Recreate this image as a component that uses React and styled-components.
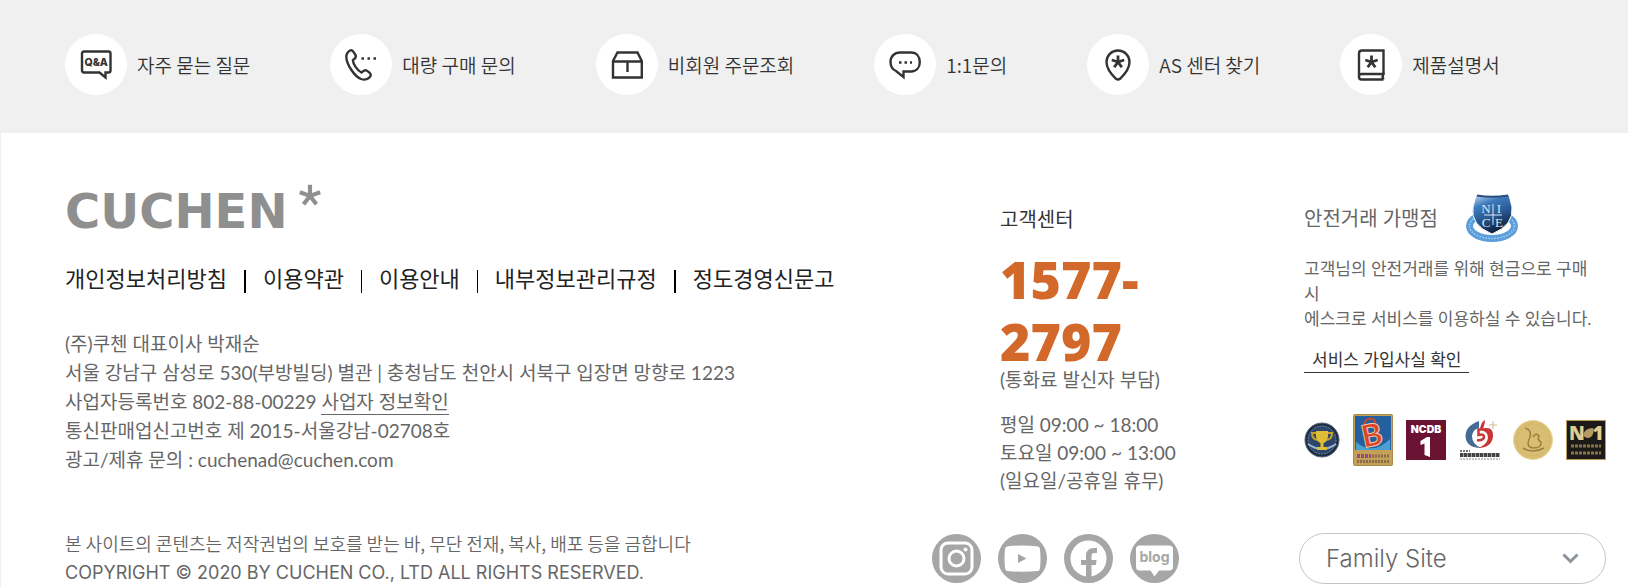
import styled, { createGlobalStyle } from "styled-components"

const GlobalStyle = createGlobalStyle`
  *, *::before, *::after {
    box-sizing: border-box;
  }

  body {
    margin: 0;
    background: #fff;
    color: #666;
    font-family: "Lato", "Noto Sans CJK KR", sans-serif;
    font-size: 19px;
    word-break: keep-all;
  }

  a {
    color: inherit;
    text-decoration: none;
  }

  p, ul {
    margin: 0;
    padding: 0;
    list-style: none;
  }

  svg {
    display: block;
    flex: none;
  }
`

const Page = styled.div`
  border-left: 1px solid #f0f0f0;
`

/* quick menu */

const QuickMenu = styled.nav`
  background: #f0f0f0;
  padding: 34px 22px 38px 64px;
`

const QuickList = styled.ul`
  display: flex;
  flex-wrap: wrap;
  gap: 20px 80px;
`

const QuickLink = styled.a`
  display: flex;
  align-items: center;
  gap: 10px;
  color: #333;
  font-family: "Noto Sans CJK KR", sans-serif;
  font-weight: 350;
  line-height: 28px;
  white-space: nowrap;
`

const QuickIcon = styled.span`
  display: flex;
  align-items: center;
  justify-content: center;
  width: 62px;
  height: 61px;
  border-radius: 50%;
  background: #fff;
`

/* footer */

const FooterWrap = styled.footer`
  padding: 50px 22px 0 64px;
`

const FooterTop = styled.div`
  display: grid;
  grid-template-columns: 1fr 304px 302px;
`

const Logo = styled.a`
  display: flex;
  align-items: flex-start;
  justify-content: space-between;
  width: 257px;
  height: 48px;
  color: #8f8f8f;
  font-family: "DejaVu Sans", sans-serif;
  font-size: 48px;
  font-weight: 700;
  line-height: 56px;
`

const Policy = styled.ul`
  display: flex;
  align-items: flex-end;
  margin-top: 30px;
  color: #222;
  font-family: "Noto Sans CJK KR", sans-serif;
  font-size: 22px;
  line-height: 32px;
  white-space: nowrap;
`

const Divider = styled.li`
  width: ${props => (props.$thick ? 2 : 1)}px;
  height: 23px;
  margin: 0 17px;
  background: #000;
`

const Info = styled.address`
  margin-top: 36px;
  font-style: normal;
  font-weight: 400;
  line-height: 29px;
`

const InfoLink = styled.a`
  padding-bottom: 1px;
  border-bottom: 1px solid #666;
`

const Center = styled.section`
  padding: 22px 120px 0 0;
  line-height: 28px;
`

const CenterTitle = styled.p`
  color: #333;
  font-size: 20px;
`

const Tel = styled.a`
  display: block;
  margin-top: 15px;
  color: #d2692a;
  font-family: "Open Sans", sans-serif;
  font-size: 52px;
  font-weight: 800;
  line-height: 62px;
`

const TelNote = styled.p`
  line-height: 16px;
  white-space: nowrap;
`

const Hours = styled.p`
  margin-top: 23px;
  white-space: nowrap;
`

const Escrow = styled.section`
  padding-top: 11px;
  font-size: 17px;
`

const EscrowHead = styled.div`
  display: flex;
  align-items: center;
  gap: 28px;
  font-size: 20px;
  line-height: 28px;
`

const EscrowText = styled.p`
  margin-top: 14px;
  padding-right: 12px;
  line-height: 25px;
`

const EscrowLink = styled.a`
  display: inline-block;
  margin-top: 17px;
  padding: 0 8px;
  border-bottom: 1px solid #333;
  color: #333;
  line-height: 24px;
`

const Awards = styled.ul`
  display: flex;
  align-items: center;
  justify-content: space-between;
  margin-top: 41px;
`

const FooterBottom = styled.div`
  display: flex;
  align-items: center;
  margin-top: 34px;
`

const Copyright = styled.div`
  flex: 1;
  font-family: "Noto Sans CJK KR", sans-serif;
  font-size: 18px;
  font-weight: 350;
  line-height: 29px;
`

const CopyrightEn = styled.p`
  font-family: "Inter", sans-serif;
  font-weight: 400;
`

const Social = styled.ul`
  display: flex;
  gap: 17px;
  margin-right: 120px;
`

const FamilyBox = styled.label`
  display: grid;
  align-items: center;
  width: 307px;

  > * {
    grid-area: 1 / 1;
  }

  svg {
    justify-self: end;
    margin-right: 27px;
    pointer-events: none;
  }
`

const FamilySelect = styled.select`
  appearance: none;
  width: 100%;
  height: 51px;
  padding: 0 60px 0 26px;
  border: 1px solid #c4c4c4;
  border-radius: 26px;
  background: #fff;
  color: #666;
  font-family: "Inter", sans-serif;
  font-size: 24px;
  font-weight: 300;
`

const Line = styled.svg`
  fill: none;
  stroke: #333;
  stroke-width: 2.4;
`

const Star = ({ x, y }) => (
  <path
    transform={`translate(${x} ${y})`}
    d="M0 0V-6.5M0 0L6.2-2M0 0L3.8 5.3M0 0L-3.8 5.3M0 0L-6.2-2"
    strokeWidth="2.8"
  />
)

const QnaIcon = () => (
  <Line width="32" height="32" viewBox="0 0 32 32">
    <path d="M4 2.5H28.500Q30.500 2.500 30.500 4.500V21.500Q30.500 23.500 28.500 23.500H25.500V28.500L19.500 23.500H4Q2 23.500 2 21.500V4.500Q2 2.500 4 2.500Z" />
    <text
      x="16.2"
      y="17"
      fill="#333"
      stroke="none"
      fontFamily="Inter, sans-serif"
      fontSize="10.5"
      fontWeight="800"
      textAnchor="middle"
    >
      Q&amp;A
    </text>
  </Line>
)

const PhoneIcon = () => (
  <Line width="32" height="32" viewBox="0 0 32 32">
    <path d="M5 1.500C7 .5 8 2 10.500 6C11.500 8 10.500 9.500 8 11C7.500 14.500 12.500 21.500 16.500 23.500C18.500 22 19.500 20.500 21.500 21.500C25 23.500 26.500 25 25.500 27C24 30 20 31.500 16 30C9 27 1.500 15 1.300 8C1.300 5 2.500 3 5 1.500Z" />
    <path d="M16.500 9.500H31" strokeWidth="2.500" strokeDasharray="2.500 3.500" />
  </Line>
)

const BoxIcon = () => (
  <Line width="32" height="32" viewBox="0 0 32 32">
    <path d="M2 12V28.500H30.800V12L26.500 3.500H6.500ZM2 12.500H31M16.500 12.500V23" />
  </Line>
)

const ChatIcon = () => (
  <Line width="32" height="32" viewBox="0 0 32 32">
    <path d="M11 3.500H22C27.500 3.500 30.800 7.500 30.800 13C30.800 18.500 27.500 22.500 22 22.500H14.500V28L7 22C3.500 20.500 1.500 17 1.500 13C1.500 7.500 5.500 3.500 11 3.500Z" />
    <path d="M10 13.500H23" strokeWidth="2.500" strokeDasharray="2.500 3" />
  </Line>
)

const PinIcon = () => (
  <Line width="32" height="32" viewBox="0 0 32 32">
    <path d="M16 1.500C22.500 1.500 27.500 6.500 27.500 13C27.500 19 22.500 25.500 18 29.800Q16 31.300 14 29.800C9.500 25.500 4.500 19 4.500 13C4.500 6.500 9.500 1.500 16 1.500Z" />
    <Star x={16} y={13} />
  </Line>
)

const BookIcon = () => (
  <Line width="32" height="32" viewBox="0 0 32 32">
    <path d="M28.500 25V1.500H7Q4 1.500 4 4.500V28Q4 30.500 6.500 30.500H28.500M4 27.500Q4 25 6.500 25H28.500L27.500 28L28.500 30.500" />
    <Star x={16.5} y={13} />
  </Line>
)

const NiceMark = () => (
  <svg width="52" height="48" viewBox="0 0 52 48">
    <defs>
      <linearGradient id="shield" x1="0" y1="0" x2="0.4" y2="1">
        <stop offset="0" stopColor="#c9dcee" />
        <stop offset="0.3" stopColor="#3f7cbd" />
        <stop offset="0.65" stopColor="#27558f" />
        <stop offset="1" stopColor="#10233f" />
      </linearGradient>
    </defs>
    <ellipse cx="26" cy="32" rx="22.500" ry="12.500" fill="none" stroke="#5b9edb" strokeWidth="7" />
    <ellipse cx="26" cy="32" rx="22.500" ry="12.500" fill="none" stroke="#a9cff0" strokeWidth="1.500" strokeDasharray="1.500 1.500" />
    <path d="M10 1Q26 3 43 1L46 13Q48 31 26 40Q4 31 7 13Z" fill="url(#shield)" stroke="#fff" strokeWidth="1" />
    <path d="M11 1.500Q26 4 42 1.500" fill="none" stroke="#2b4f7c" strokeWidth="2" />
    <path d="M27 10V31M18 21H36" stroke="#dbe8f5" strokeWidth="1" />
    <g fill="#dbe8f5" fontFamily="Liberation Serif, serif" fontSize="13" textAnchor="middle">
      <text x="20" y="19">N</text>
      <text x="33" y="19">I</text>
      <text x="20" y="33">C</text>
      <text x="33" y="33">E</text>
    </g>
  </svg>
)

const TrophyAward = () => (
  <svg width="36" height="36" viewBox="0 0 36 36">
    <circle cx="18" cy="18" r="17" fill="#1c2b42" stroke="#5b6573" />
    <circle cx="18" cy="18" r="14" fill="#2c466c" stroke="#7b8da6" strokeDasharray="2 1" />
    <path d="M4 22Q18 32 32 22" fill="none" stroke="#9fb4cd" strokeWidth="2" />
    <path d="M13 11H8Q8 18 15 18M23 11H28Q28 18 21 18" fill="none" stroke="#c9a227" strokeWidth="2" />
    <path d="M12 9H24Q25 19 19.500 21V25H23V28H13V25H16.500V21Q11 19 12 9Z" fill="#e0bd35" />
  </svg>
)

const BrandAward = () => (
  <svg width="40" height="52" viewBox="0 0 40 52">
    <rect x="0.500" y="0.500" width="39" height="51" rx="1" fill="#c5a057" stroke="#a8884c" />
    <rect x="2" y="2" width="36" height="34" fill="#245f9f" />
    <path d="M3 28Q20 42 37 25V36H3Z" fill="#4aa0d2" />
    <path d="M11 12Q12 3 20 5Q23 7 22 10" fill="none" stroke="#c84632" strokeWidth="2" />
    <text x="19" y="32" transform="rotate(-12 19 22)" fill="#d9442a" stroke="#f2c9a0" strokeWidth="1" fontFamily="Lato, sans-serif" fontSize="31" fontWeight="900" textAnchor="middle">B</text>
    <path d="M4 42H18" stroke="#9a4a83" strokeWidth="4" strokeDasharray="3 1" />
    <path d="M19 42H36M4 47.500H36" stroke="#8a6a4d" strokeWidth="3" strokeDasharray="2 1" />
  </svg>
)

const NcdbAward = () => (
  <svg width="40" height="40" viewBox="0 0 40 40">
    <rect width="40" height="40" fill="#6a1231" />
    <text x="20" y="13" fill="#fff" fontFamily="Inter, sans-serif" fontSize="10.5" fontWeight="900" textAnchor="middle">NCDB</text>
    <path d="M14.500 21L21 17H24V37L18.500 35V23.500L14.500 25Z" fill="#fff" />
  </svg>
)

const AppleAward = () => (
  <svg width="40" height="40" viewBox="0 0 40 40">
    <path d="M19 1Q5 6 5.500 17Q7 28 21 28Q12 24 12 16Q13 9 19 8Z" fill="#436b96" />
    <path d="M25 8Q34 7 33 17Q31 28 18 28Q27 25 28 18Q28 12 23 11Z" fill="#c93636" />
    <path d="M20 9Q21 2 25 0Q25 4 23 9Z" fill="#c93636" />
    <path d="M25 9.500H18.500V15Q24.500 13.500 24 17.500Q22.500 21 17 20" fill="none" stroke="#c93636" strokeWidth="2.500" />
    <path d="M33 1V9M29 5H37" stroke="#cdbb91" />
    <path d="M0 31H10" stroke="#777" strokeWidth="2" strokeDasharray="2 1" />
    <path d="M0 35H40" stroke="#444" strokeWidth="4" strokeDasharray="3.500 .5" />
    <path d="M0 39H40" stroke="#888" strokeDasharray="2 1" />
  </svg>
)

const GoldAward = () => (
  <svg width="40" height="40" viewBox="0 0 40 40">
    <circle cx="20" cy="20" r="19.500" fill="#d8be72" stroke="#e8d69d" />
    <circle cx="20" cy="20" r="16" fill="none" stroke="#cbb063" strokeDasharray="1.500 1.500" />
    <path d="M12 8Q19 10 17 17Q12 27 20 28Q29 28 28 22Q24 20 26 16Q23 12 20 17M10 28Q20 34 31 28" fill="none" stroke="#9b803c" strokeWidth="1.500" />
  </svg>
)

const NumberOneAward = () => (
  <svg width="40" height="40" viewBox="0 0 40 40">
    <rect x="0.500" y="0.500" width="39" height="39" fill="#1c1a18" stroke="#b89d5d" />
    <g fill="#e0cb91" fontFamily="Open Sans, sans-serif" fontSize="19" fontWeight="800" textAnchor="middle">
      <text x="11" y="20">N</text>
      <text x="32" y="20">1</text>
    </g>
    <path d="M17 15Q19 8 27 8Q29 12 25 17Q20 20 17 15Z" fill="#b59a61" />
    <path d="M5 26H35M5 33H35" stroke="#8a7447" strokeWidth="3" strokeDasharray="3 1" />
  </svg>
)

const InstagramIcon = () => (
  <svg width="49" height="49" viewBox="0 0 49 49">
    <circle cx="24.500" cy="24.500" r="24.500" fill="#a6a6a6" />
    <g fill="none" stroke="#fff" strokeWidth="3">
      <rect x="9" y="9" width="31" height="31" rx="7" />
      <circle cx="24.500" cy="24.500" r="7.500" />
    </g>
    <circle cx="33.500" cy="15.500" r="2" fill="#fff" />
  </svg>
)

const YoutubeIcon = () => (
  <svg width="49" height="49" viewBox="0 0 49 49">
    <circle cx="24.500" cy="24.500" r="24.500" fill="#a6a6a6" />
    <path d="M9 12.500Q24.500 10.500 40 12.500Q42 13 42 15.500Q43 24.500 42 34Q42 36.500 40 37Q24.500 38.500 9 37Q7 36.500 7 34Q6 24.500 7 15.500Q7 13 9 12.500Z" fill="#fff" />
    <path d="M20 20L28.500 24.500L20 29Z" fill="#a6a6a6" />
  </svg>
)

const FacebookIcon = () => (
  <svg width="49" height="49" viewBox="0 0 49 49">
    <circle cx="24.500" cy="24.500" r="24.500" fill="#a6a6a6" />
    <circle cx="24.500" cy="24.500" r="18" fill="#fff" />
    <path d="M22 43V31H17V26H22V22Q22 14 30 14H33V19H30Q27.500 19 27.500 22V26H32.500L32 31H27.500V43Z" fill="#a6a6a6" />
  </svg>
)

const BlogIcon = () => (
  <svg width="49" height="49" viewBox="0 0 49 49">
    <circle cx="24.500" cy="24.500" r="24.500" fill="#a6a6a6" />
    <path d="M10 11.500H39Q43 11.500 43 15V33Q43 36.500 39 36.500H29L24.500 42.500L20.500 36.500H10Q6 36.500 6 33V15Q6 11.500 10 11.500Z" fill="#fff" />
    <text x="24.500" y="28" fill="#a6a6a6" fontFamily="Inter, sans-serif" fontSize="14" fontWeight="700" textAnchor="middle">blog</text>
  </svg>
)

const quickMenu = [
  { label: "자주 묻는 질문", Icon: QnaIcon },
  { label: "대량 구매 문의", Icon: PhoneIcon },
  { label: "비회원 주문조회", Icon: BoxIcon },
  { label: "1:1문의", Icon: ChatIcon },
  { label: "AS 센터 찾기", Icon: PinIcon },
  { label: "제품설명서", Icon: BookIcon },
]

const awards = [TrophyAward, BrandAward, NcdbAward, AppleAward, GoldAward, NumberOneAward]

const social = [
  { name: "Instagram", Icon: InstagramIcon },
  { name: "YouTube", Icon: YoutubeIcon },
  { name: "Facebook", Icon: FacebookIcon },
  { name: "Blog", Icon: BlogIcon },
]

export default function App() {
  return (
    <Page>
      <GlobalStyle />
      <QuickMenu>
        <QuickList>
          {quickMenu.map(({ label, Icon }) => (
            <li key={label}>
              <QuickLink href="#">
                <QuickIcon>
                  <Icon />
                </QuickIcon>
                {label}
              </QuickLink>
            </li>
          ))}
        </QuickList>
      </QuickMenu>

      <FooterWrap>
        <FooterTop>
          <div>
            <Logo href="#">
              CUCHEN
              <svg width="24" height="24" viewBox="0 0 26 26">
                <path
                  d="M13 14V2M13 14L24 10M13 14L20 23M13 14L6 23M13 14L2 10"
                  fill="none"
                  stroke="#8f8f8f"
                  strokeWidth="4.500"
                />
              </svg>
            </Logo>
            <Policy>
              <li><a href="#">개인정보처리방침</a></li>
              <Divider $thick aria-hidden="true" />
              <li><a href="#">이용약관</a></li>
              <Divider aria-hidden="true" />
              <li><a href="#">이용안내</a></li>
              <Divider aria-hidden="true" />
              <li><a href="#">내부정보관리규정</a></li>
              <Divider $thick aria-hidden="true" />
              <li><a href="#">정도경영신문고</a></li>
            </Policy>
            <Info>
              <p>(주)쿠첸 대표이사 박재순</p>
              <p>서울 강남구 삼성로 530(부방빌딩) 별관 | 충청남도 천안시 서북구 입장면 망향로 1223</p>
              <p>
                사업자등록번호 802-88-00229 <InfoLink href="#">사업자 정보확인</InfoLink>
              </p>
              <p>통신판매업신고번호 제 2015-서울강남-02708호</p>
              <p>광고/제휴 문의 : cuchenad@cuchen.com</p>
            </Info>
          </div>

          <Center>
            <CenterTitle>고객센터</CenterTitle>
            <Tel href="tel:1577-2797">1577-2797</Tel>
            <TelNote>(통화료 발신자 부담)</TelNote>
            <Hours>
              평일 09:00 ~ 18:00
              <br />
              토요일 09:00 ~ 13:00
              <br />
              (일요일/공휴일 휴무)
            </Hours>
          </Center>

          <Escrow>
            <EscrowHead>
              안전거래 가맹점
              <NiceMark />
            </EscrowHead>
            <EscrowText>
              고객님의 안전거래를 위해 현금으로 구매 시
              <br />
              에스크로 서비스를 이용하실 수 있습니다.
            </EscrowText>
            <EscrowLink href="#">서비스 가입사실 확인</EscrowLink>
            <Awards>
              {awards.map((Award, idx) => (
                <li key={idx}>
                  <Award />
                </li>
              ))}
            </Awards>
          </Escrow>
        </FooterTop>

        <FooterBottom>
          <Copyright>
            <p>본 사이트의 콘텐츠는 저작권법의 보호를 받는 바, 무단 전재, 복사, 배포 등을 금합니다</p>
            <CopyrightEn>COPYRIGHT © 2020 BY CUCHEN CO., LTD ALL RIGHTS RESERVED.</CopyrightEn>
          </Copyright>
          <Social>
            {social.map(({ name, Icon }) => (
              <li key={name}>
                <a href="#" aria-label={name}>
                  <Icon />
                </a>
              </li>
            ))}
          </Social>
          <FamilyBox>
            <FamilySelect aria-label="Family Site" defaultValue="family">
              <option value="family">Family Site</option>
            </FamilySelect>
            <svg width="17" height="11" viewBox="0 0 17 11">
              <path d="M1.500 1.500L8.500 8.500L15.500 1.500" fill="none" stroke="#8d939b" strokeWidth="3" />
            </svg>
          </FamilyBox>
        </FooterBottom>
      </FooterWrap>
    </Page>
  )
}
